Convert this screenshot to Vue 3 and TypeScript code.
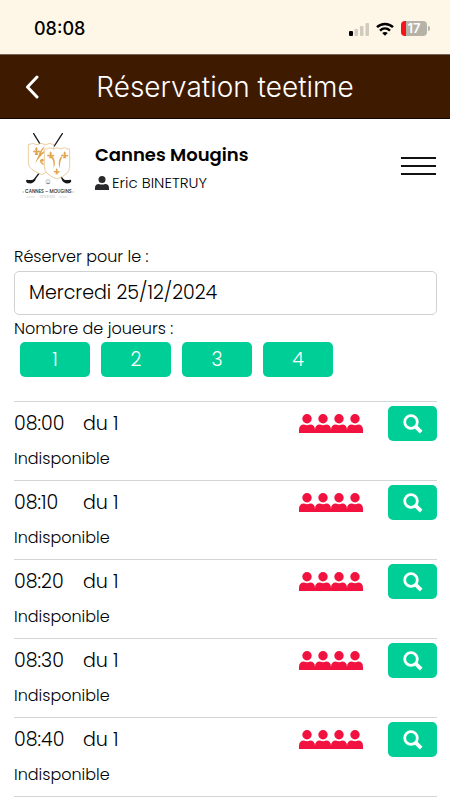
<script setup lang="ts">
import { ref } from 'vue'

interface Slot {
  time: string
  start: string
  status: string
  players: number
}

const date = ref('Mercredi 25/12/2024')
const playerOptions: number[] = [1, 2, 3, 4]
const selectedPlayers = ref<number | null>(null)

const slots: Slot[] = ['08:00', '08:10', '08:20', '08:30', '08:40'].map((time) => ({
  time,
  start: 'du 1',
  status: 'Indisponible',
  players: 4,
}))
</script>

<template>
  <div class="app">
    <div class="status">
      <span class="clock">08:08</span>
      <div class="indicators">
        <svg class="signal" viewBox="0 0 20 14" aria-hidden="true">
          <rect x="0" y="9" width="4" height="5" rx="1" fill="#000" />
          <rect x="5.500" y="7" width="3.500" height="7" rx="1" fill="#cfcbbf" />
          <rect x="11" y="4" width="3.500" height="10" rx="1" fill="#cfcbbf" />
          <rect x="16.500" y="1" width="3.500" height="13" rx="1" fill="#cfcbbf" />
        </svg>
        <svg class="wifi" viewBox="0 0 18 14" aria-hidden="true">
          <path d="M1 5.200C5.500.9 12.500.9 17 5.200M4 8.600c2.900-2.700 7.100-2.700 10 0" fill="none" stroke="#000" stroke-width="2.500" />
          <path d="M9 13.800 6.200 11c1.600-1.400 4-1.400 5.600 0z" fill="#000" />
        </svg>
        <div class="battery"><span>17</span></div>
      </div>
    </div>

    <header class="bar">
      <button class="back" type="button" aria-label="Retour">
        <svg viewBox="0 0 14 24" aria-hidden="true">
          <path d="M12 2 2.500 12 12 22" fill="none" stroke="#fff" stroke-width="3" stroke-linecap="round" stroke-linejoin="round" />
        </svg>
      </button>
      <h1>Réservation teetime</h1>
    </header>

    <main>
      <section class="club">
        <svg class="logo" viewBox="36 36 156 204" role="img" aria-label="Cannes Mougins">
          <g fill="none" stroke="#17181a" stroke-linecap="round">
            <path d="M71 41 92 75M157 41 133 78" stroke-width="4" />
            <path d="M87 160 72 180M145 160 160 180" stroke-width="4" />
          </g>
          <path d="M75 176c-7 5-15 4-25 3-4 4 0 10 7 11 9 1 14-2 20-11zM157 176c7 5 15 4 25 3 4 4 0 10-7 11-9 1-14-2-20-11z" fill="#17181a" />
          <path d="M55 73q9 0 12-3 14 8 26 0 14 8 27 0 6 4 11 3v57q-2 20-36 34-38-14-40-34z" fill="#fff" stroke="#e3b46c" stroke-width="2" />
          <g fill="#dfa550">
            <path d="M105 78C94 85 88 97 85 108l-10 22 12-15 8-10 8-8v-4l-10 6z" />
            <path d="M90 120l6-4 5 2v6l-8 2 8 4-1 6-9-8z" />
            <path d="M79 80q6 6 2 13 9-4 9 3-4 3-8 0l3 9h-11l3-9q-6 3-8-1 2-6 8-2-4-7 2-13z" />
          </g>
          <path d="M103 87q10 1 15-4 12 8 23 0 12 8 23 0 6 5 15 4v53q0 23-38 37-38-14-38-37z" fill="#fff" stroke="#e3b46c" stroke-width="2" />
          <g fill="#dfa550">
            <path d="M122 94q6 6 2 11 8-3 9 3-4 3-8 0l2 7h-10l2-7q-6 3-8-1 3-6 9-2-4-6 2-11z" />
            <path d="M164 94q6 6 2 11 8-3 9 3-4 3-8 0l2 7h-10l2-7q-6 3-8-1 3-6 9-2-4-6 2-11z" />
            <path d="M140 145q5 5 2 9 7-3 7 3-3 3-7 0l2 6h-8l2-6q-6 2-7-2 2-5 7-1-3-5 2-9z" />
            <path d="M126 108c9 8 12 24 5 36 0-12 0-22-5-28zM155 108c-9 8-12 24-5 36 0-12 0-22 5-28z" />
          </g>
          <circle cx="114" cy="185" r="7" fill="#e4e7e9" stroke="#aaa" />
          <path d="M108 188q6 5 12 0-1 4-6 4-4 0-6-4z" fill="#222" />
          <text x="115" y="220" text-anchor="middle" class="logo-name">CANNES – MOUGINS</text>
          <path d="M38 216h4M187 216h4" stroke="#888" stroke-width="2" />
          <path d="M49 231h25M147 231h25" stroke="#ccc" stroke-width="2" />
          <text x="112" y="235" text-anchor="middle" class="logo-since">DEPUIS 1923</text>
        </svg>
        <div class="identity">
          <h2>Cannes Mougins</h2>
          <p>
            <svg class="person" viewBox="0 0 16 16" aria-hidden="true">
              <circle cx="8" cy="4" r="4" />
              <path d="M0 16v-2.500Q0 9 4.500 9q3.500 1.600 7 0Q16 9 16 13.500V16z" />
            </svg>
            Eric BINETRUY
          </p>
        </div>
        <button class="menu" type="button" aria-label="Menu"><i></i><i></i><i></i></button>
      </section>

      <form class="search" @submit.prevent>
        <label for="date">Réserver pour le :</label>
        <input id="date" v-model="date" type="text" readonly />
        <span id="players-label" class="label">Nombre de joueurs :</span>
        <div class="players" role="group" aria-labelledby="players-label">
          <button v-for="n in playerOptions" :key="n" type="button" @click="selectedPlayers = n">{{ n }}</button>
        </div>
      </form>

      <ul class="slots">
        <li v-for="slot in slots" :key="slot.time">
          <div class="line">
            <time>{{ slot.time }}</time>
            <span class="start">{{ slot.start }}</span>
            <div class="people">
              <svg v-for="p in slot.players" :key="p" viewBox="0 0 16 19" aria-hidden="true">
                <circle cx="8" cy="4.700" r="4.700" />
                <path d="M0 19v-3Q0 10.500 5 10.500q3 1.300 6 0 5 0 5 5.500v3z" />
              </svg>
            </div>
            <button class="view" type="button" :aria-label="'Voir ' + slot.time">
              <svg viewBox="0 0 20 20" aria-hidden="true">
                <circle cx="8" cy="8" r="6.300" fill="none" stroke="#fff" stroke-width="2.800" />
                <path d="M12.400 12.400 18.200 18.200" stroke="#fff" stroke-width="3.800" />
              </svg>
            </button>
          </div>
          <p>{{ slot.status }}</p>
        </li>
      </ul>
    </main>
  </div>
</template>

<style>
body {
  background: #fff;
}
</style>

<style scoped>
.app {
  color: #000;
  font-family: Poppins, Inter, sans-serif;
  font-size: 16px;
  font-weight: 300;
}

button {
  padding: 0;
  border: 0;
  background: none;
  font: inherit;
  cursor: pointer;
}

svg {
  display: block;
}

h1,
h2,
p,
ul {
  margin: 0;
  padding: 0;
}

.status {
  display: flex;
  align-items: center;
  justify-content: space-between;
  height: 54px;
  padding: 3px 20px 0 34px;
  box-sizing: border-box;
  background: #fef7e8;
}

.clock {
  color: #000;
  font-family: Inter, sans-serif;
  font-size: 18px;
  font-weight: 500;
}

.indicators {
  display: flex;
  align-items: center;
  gap: 7px;
}

.signal {
  width: 20px;
  height: 14px;
}

.wifi {
  width: 18px;
  height: 14px;
}

.battery {
  position: relative;
  width: 26px;
  height: 15px;
  margin-right: 3px;
  border-radius: 4px;
  background: linear-gradient(to right, #f5141c 5px, #b5b2a8 5px);
  color: #fff;
  font-family: Inter, sans-serif;
  font-size: 13px;
  font-weight: 600;
  line-height: 15px;
  text-align: center;
}

.battery::after {
  content: '';
  position: absolute;
  top: 5px;
  right: -3px;
  width: 2px;
  height: 5px;
  border-radius: 0 2px 2px 0;
  background: #b5b2a8;
}

.bar {
  display: grid;
  grid-template-columns: 64px 1fr 64px;
  align-items: center;
  height: 65px;
  box-sizing: border-box;
  border-top: 1px solid #76635a;
  border-bottom: 1px solid #140500;
  background: #3e1b00;
}

.back {
  justify-self: center;
}

.back svg {
  width: 14px;
  height: 24px;
}

h1 {
  color: #fff;
  font-family: Inter, sans-serif;
  font-size: 28px;
  font-weight: 300;
  text-align: center;
  white-space: nowrap;
}

main {
  padding: 0 13px 0 14px;
}

.club {
  display: flex;
  align-items: center;
  padding: 13px 1px 0 8px;
}

.logo {
  width: 52px;
  height: 68px;
}

.logo-name {
  fill: #222;
  font-size: 14px;
  font-weight: 500;
}

.logo-since {
  fill: #aaa;
  font-size: 8px;
}

.identity {
  flex: 1;
  padding: 6px 0 0 21px;
}

h2 {
  font-size: 18px;
  font-weight: 600;
  line-height: 28px;
}

.identity p {
  display: flex;
  align-items: center;
  gap: 3px;
  font-size: 15px;
  line-height: 28px;
}

.person {
  width: 14px;
  height: 14px;
  fill: #29292b;
}

.menu {
  display: flex;
  flex-direction: column;
  gap: 6px;
  width: 35px;
}

.menu i {
  height: 2px;
  background: #111;
}

.search {
  display: flex;
  flex-direction: column;
  padding-top: 44px;
}

.search label,
.label {
  line-height: 26px;
}

.search input {
  height: 44px;
  margin: 1px 0;
  padding: 0 14px 2px;
  box-sizing: border-box;
  border: 1px solid #cfd2d5;
  border-radius: 5px;
  background: #fff;
  color: #000;
  font: inherit;
  font-size: 19px;
  outline: none;
}

.players {
  display: flex;
  gap: 11px;
  padding: 0 6px;
}

.players button {
  width: 70px;
  height: 35px;
  border-radius: 5px;
  background: #00ce97;
  color: #fff;
  font-size: 19px;
}

.slots {
  margin-top: 24px;
  border-bottom: 1px solid #d3d5d7;
  list-style: none;
}

.slots li {
  height: 79px;
  padding-top: 4px;
  box-sizing: border-box;
  border-top: 1px solid #d3d5d7;
}

.line {
  display: flex;
  align-items: center;
}

time {
  width: 69px;
  font-size: 19px;
}

.start {
  font-size: 19px;
}

.people {
  display: flex;
  margin-left: auto;
  margin-right: 25px;
}

.people svg {
  width: 16px;
  height: 19px;
  fill: #f2123f;
}

.view {
  display: grid;
  place-items: center;
  width: 49px;
  height: 35px;
  border-radius: 5px;
  background: #00ce97;
}

.view svg {
  width: 20px;
  height: 20px;
}

.slots p {
  line-height: 35px;
}
</style>
